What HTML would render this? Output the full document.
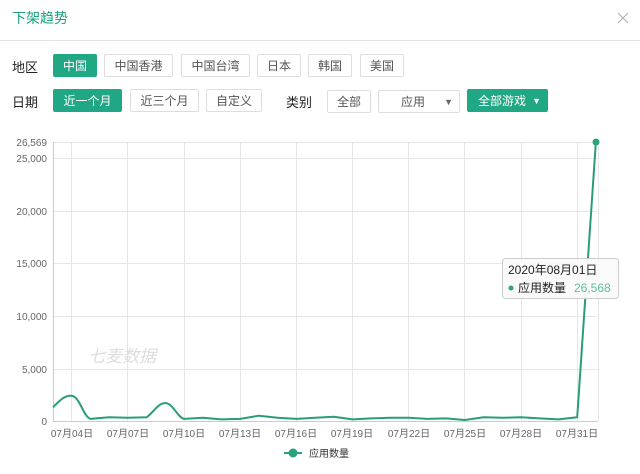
<!DOCTYPE html>
<html><head><meta charset="utf-8"><style>
body{margin:0;width:640px;height:474px;background:#fff;font-family:"Liberation Sans","Noto Sans CJK SC",sans-serif;position:relative;overflow:hidden}
.t{position:absolute;left:12px;top:8px;font-size:14px;color:#1aa37e}
.hr{position:absolute;left:0;right:0;top:40px;height:1px;background:#e3e3e3}
.l{position:absolute;font-size:13px;color:#222}
.b{position:absolute;height:23px;line-height:23px;border:1px solid #ddd;border-radius:2px;font-size:12px;color:#555;text-align:center;box-sizing:border-box}
.a{background:#20a884;border-color:#20a884;color:#fff}
svg{position:absolute;left:0;top:0}
</style></head><body>
<div class="t">下架趋势</div><div class="hr"></div>
<div class="l" style="left:12px;top:57px">地区</div>
<div class="b a" style="left:53px;top:54px;width:44px">中国</div>
<div class="b" style="left:104px;top:54px;width:69px">中国香港</div>
<div class="b" style="left:181px;top:54px;width:69px">中国台湾</div>
<div class="b" style="left:257px;top:54px;width:44px">日本</div>
<div class="b" style="left:308px;top:54px;width:44px">韩国</div>
<div class="b" style="left:360px;top:54px;width:44px">美国</div>
<div class="l" style="left:12px;top:92px">日期</div>
<div class="b a" style="left:53px;top:89px;width:69px">近一个月</div>
<div class="b" style="left:130px;top:89px;width:69px">近三个月</div>
<div class="b" style="left:206px;top:89px;width:56px">自定义</div>
<div class="l" style="left:286px;top:92px">类别</div>
<div class="b" style="left:327px;top:90px;width:44px">全部</div>
<div class="b" style="left:378px;top:90px;width:82px;text-align:left;padding-left:22px">应用<span style="position:absolute;right:6px;font-size:9px;color:#666">▼</span></div>
<div class="b a" style="left:467px;top:89px;width:81px;text-align:left;padding-left:10px">全部游戏<span style="position:absolute;right:6px;font-size:9px">▼</span></div>
<svg width="640" height="474" font-family="Liberation Sans,Noto Sans CJK SC,sans-serif" font-size="10" fill="#666">
<g stroke="#aaa" stroke-width="1"><line x1="618" y1="13" x2="628" y2="23"/><line x1="628" y1="13" x2="618" y2="23"/></g>
<g stroke="#e6e6e6" stroke-width="1">
<line x1="53" x2="598" y1="142.5" y2="142.5"/><line x1="53" x2="598" y1="158.5" y2="158.5"/><line x1="53" x2="598" y1="211.5" y2="211.5"/><line x1="53" x2="598" y1="263.5" y2="263.5"/><line x1="53" x2="598" y1="316.5" y2="316.5"/><line x1="53" x2="598" y1="369.5" y2="369.5"/>
<line x1="71.5" x2="71.5" y1="142" y2="421"/><line x1="127.5" x2="127.5" y1="142" y2="421"/><line x1="184.5" x2="184.5" y1="142" y2="421"/><line x1="240.5" x2="240.5" y1="142" y2="421"/><line x1="296.5" x2="296.5" y1="142" y2="421"/><line x1="352.5" x2="352.5" y1="142" y2="421"/><line x1="408.5" x2="408.5" y1="142" y2="421"/><line x1="464.5" x2="464.5" y1="142" y2="421"/><line x1="521.5" x2="521.5" y1="142" y2="421"/><line x1="577.5" x2="577.5" y1="142" y2="421"/><line x1="598.5" x2="598.5" y1="142" y2="421"/>
</g>
<line x1="53.5" x2="53.5" y1="142" y2="421" stroke="#ccc"/><line x1="53" x2="598" y1="421.5" y2="421.5" stroke="#ccc"/>
<g text-anchor="end"><text x="47" y="146">26,569</text><text x="47" y="162">25,000</text><text x="47" y="215">20,000</text><text x="47" y="267">15,000</text><text x="47" y="320">10,000</text><text x="47" y="373">5,000</text><text x="47" y="425">0</text></g>
<g text-anchor="middle"><text x="72" y="437">07月04日</text><text x="128" y="437">07月07日</text><text x="184" y="437">07月10日</text><text x="240" y="437">07月13日</text><text x="296" y="437">07月16日</text><text x="352" y="437">07月19日</text><text x="409" y="437">07月22日</text><text x="465" y="437">07月25日</text><text x="521" y="437">07月28日</text><text x="577" y="437">07月31日</text></g>
<text x="88" y="362" font-size="17" fill="#ddd" font-style="italic">七麦数据</text>
<path fill="none" stroke="#2a9c7c" stroke-width="2" stroke-linejoin="round" d="M53,407.3 C60,400 65,395 71.7,395.8 C80,397 83,416 90.4,418.9 L109.2,417.3 L127.9,417.8 L146.6,417.3 C154,412 158,403 165.3,403.1 C173,403 177,417 184,418.9 L202.8,417.8 L221.5,419.4 L240.2,418.9 L258.9,415.7 L277.6,417.8 L296.4,418.9 L315.1,417.8 L333.8,416.8 L352.5,419.4 L371.2,418.4 L390,417.8 L408.7,417.8 L427.4,418.9 L446.1,418.4 L464.8,420 L483.6,417.3 L502.3,417.8 L521,417.3 L539.7,418.4 L558.4,419.4 L577.2,417.3 L595.9,141.5"/>
<circle cx="596" cy="142" r="3.5" fill="#2aa380"/>
<rect x="502.5" y="258.5" width="116" height="40" rx="3" fill="rgba(250,250,250,0.95)" stroke="#ccc"/>
<text x="508" y="274" font-size="12" fill="#222">2020年08月01日</text>
<circle cx="511" cy="288" r="2.5" fill="#2aa380"/>
<text x="518" y="292" font-size="12" fill="#222">应用数量</text>
<text x="574" y="292" font-size="12" fill="#5cc0a0">26,568</text>
<line x1="284" x2="302" y1="453" y2="453" stroke="#2aa380" stroke-width="2"/><circle cx="293" cy="453" r="4.5" fill="#2aa380"/>
<text x="309" y="457" font-size="10" fill="#333">应用数量</text>
</svg>
</body></html>
